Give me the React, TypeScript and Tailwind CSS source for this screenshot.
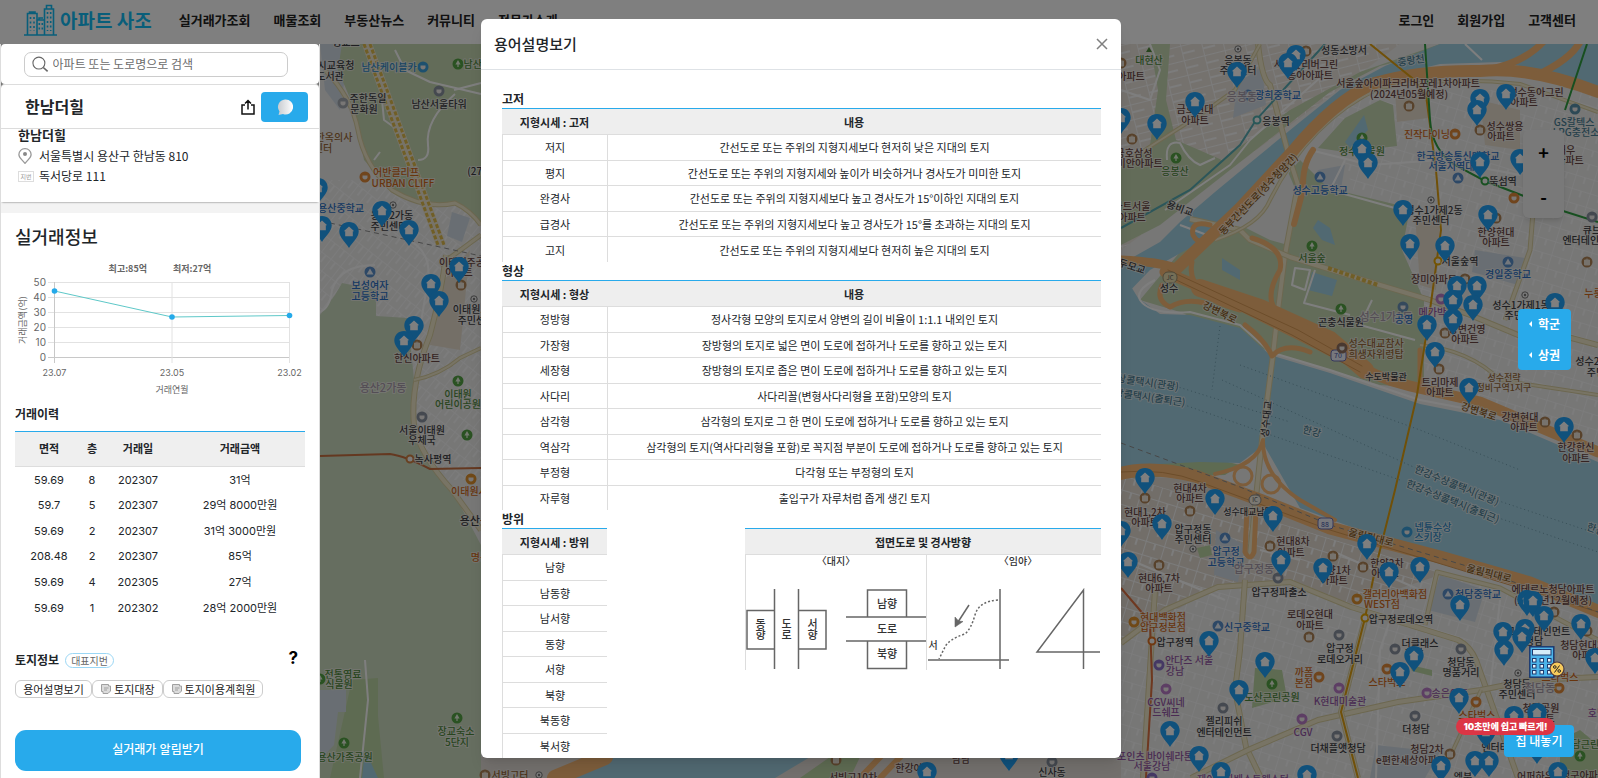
import React from "react";

const KR = "font-['Noto_Sans_CJK_KR',sans-serif]";
const UI = "font-['Inter','Noto_Sans_CJK_KR',sans-serif]";

/* ---------- map data ---------- */

const pins: [number, number][] = [
  [318, 178], [322, 216], [349, 222], [382, 201], [409, 220], [459, 257], [431, 274], [439, 291], [414, 316], [404, 331],
  [1237, 62], [1296, 45], [1288, 53], [1195, 92], [1121, 108], [1157, 114], [1480, 89], [1506, 84], [1477, 100],
  [1362, 139], [1368, 153], [1480, 152], [1520, 149], [1403, 200], [1488, 205], [1410, 234], [1445, 236],
  [1457, 276], [1477, 276], [1453, 290], [1473, 295], [1453, 309], [1427, 315], [1435, 342], [1555, 293], [1469, 378],
  [1564, 417], [1145, 468], [1215, 489], [1162, 514], [1273, 506], [1121, 521], [1128, 552], [1281, 550], [1323, 558],
  [1367, 534], [1389, 562], [1420, 557], [1460, 595], [1527, 590], [1533, 591], [1544, 606], [1581, 614], [1503, 622],
  [1525, 619], [1522, 627], [1504, 640], [1595, 648], [1209, 631], [1265, 652], [1414, 646], [1400, 662], [1239, 680],
  [1459, 688], [1170, 721], [1199, 746], [1221, 762], [1307, 765], [1441, 756], [1475, 751], [1489, 751], [1514, 706],
  [1537, 703], [1486, 722], [1537, 738], [1558, 762], [927, 762], [1009, 745],
];

const INK = "#3f3f45";
const BROWN = "#6a4744";
const GREEN = "#4f8a3c";
const BLUE = "#2a6fc4";
const SKY = "#2f8ac8";
const ORANGE = "#d06a1c";
const PURPLE = "#9457a6";
const TEAL = "#4a7f96";
const OCHRE = "#9a6b3a";
const FAINT = "#a99cab";

type Label = [number, number, string, string, number?, number?];

const labels: Label[] = [
  [346, 42, "경교드", INK], [336, 65, "시교육청", INK], [330, 76, "도서관", INK], [389, 67, "남산케이블카", SKY], [482, 64, "남산공원", GREEN],
  [368, 98, "주한독일", INK], [364, 109, "문화원", INK], [439, 104, "남산서울타워", INK], [334, 137, "한옥의사", OCHRE], [323, 148, "센터", OCHRE],
  [396, 172, "어반클리프", ORANGE], [403, 183, "URBAN CLIFF", ORANGE], [484, 171, "(270m)", INK], [341, 208, "용산중학교", BLUE],
  [392, 215, "용산2가동", INK], [389, 226, "주민센터", INK], [370, 285, "보성여자", BLUE], [370, 296, "고등학교", BLUE],
  [462, 262, "이태원주공", BROWN], [459, 272, "아파트", BROWN], [474, 309, "이태원1동", INK], [476, 320, "주민센터", INK],
  [417, 358, "한신아파트", BROWN], [383, 388, "용산2가동", FAINT, 0, 11], [458, 394, "이태원", GREEN], [458, 404, "어린이공원", GREEN],
  [422, 430, "서울이태원", INK], [422, 440, "우체국", INK], [433, 459, "녹사평역", INK], [474, 491, "이태원시장", ORANGE],
  [480, 521, "용산구청", INK, 0, 11], [480, 557, "명동", ORANGE], [343, 674, "전통염료", GREEN], [339, 684, "식물원", GREEN],
  [456, 731, "장교숙소", GREEN], [457, 742, "5단지", GREEN], [345, 757, "용산가족공원", GREEN],
  [510, 775, "서빙고터", OCHRE], [853, 777, "서빙고10차", BROWN], [909, 768, "한강아", BROWN], [961, 759, "남남", BROWN], [1052, 772, "신사동", INK],
  [1149, 60, "대현산", GREEN], [1131, 76, "아파트", BROWN], [1238, 60, "응봉동", INK], [1238, 70, "주민센터", INK], [1344, 50, "성동소방서", INK],
  [1306, 64, "서울숲리버그린", BROWN], [1310, 75, "동아아파트", BROWN], [1411, 60, "중랑천", TEAL, -8], [1278, 95, "광희중학교", BLUE], [1242, 97, "응봉동", FAINT, 0, 11],
  [1195, 109, "금호현대", BROWN], [1195, 120, "아파트", BROWN], [1276, 121, "응봉역", INK], [1408, 83, "서울숲아이파크리버포레1차아파트", BROWN],
  [1409, 94, "(2024년05월예정)", BROWN], [1536, 92, "성수동아그린", BROWN], [1524, 102, "아파트", BROWN], [1574, 122, "GS칼텍스", TEAL], [1576, 132, "LPG충전소", TEAL],
  [1505, 126, "성수쌍용", BROWN], [1501, 136, "아파트", BROWN], [1427, 134, "진작다이닝", ORANGE], [1134, 153, "금호삼성", BROWN], [1135, 163, "래미안아파트", BROWN],
  [1175, 171, "응봉산", GREEN], [1362, 151, "정수식물원", GREEN], [1458, 156, "한국방송통신대학교", BLUE], [1456, 166, "서울지역대학", BLUE],
  [1566, 150, "대우", BROWN], [1570, 160, "아파트", BROWN], [1503, 181, "뚝섬역", INK], [1320, 190, "성수고등학교", BLUE], [1132, 206, "아트서울", BROWN],
  [1132, 217, "아파트", BROWN], [1180, 208, "용비교", INK, 20], [1258, 194, "동부간선도로(성수청암간)", "#8a5a20", -46],
  [1434, 210, "성수1가제2동", INK], [1431, 220, "주민센터", INK], [1496, 232, "한양현대", BROWN], [1496, 242, "아파트", BROWN],
  [1592, 230, "큐브", INK], [1590, 240, "엔터테인먼트", INK], [1312, 258, "서울숲", GREEN], [1460, 261, "서울숲역", INK], [1434, 279, "장미아파트", BROWN],
  [1508, 274, "경일중학교", BLUE], [1598, 293, "누룽지", ORANGE], [1169, 288, "성수", INK], [1132, 266, "두모교", INK, 18], [1220, 312, "강변북로", "#8a5a20", 26],
  [1341, 322, "곤충식물원", INK], [1386, 317, "성수1가1동", FAINT, 0, 11], [1404, 319, "공영", BLUE], [1437, 312, "메가박스", PURPLE],
  [1521, 305, "성수1가제1동", INK], [1523, 315, "주민센터", INK], [1467, 329, "강변건영", BROWN], [1465, 339, "아파트", BROWN],
  [1376, 343, "성수대교참사", OCHRE], [1376, 354, "희생자위령탑", OCHRE], [1386, 376, "수도박물관", INK, 0, 9], [1440, 382, "트리마제", BROWN], [1440, 392, "아파트", BROWN],
  [1504, 377, "성수전략", OCHRE, 0, 9], [1504, 387, "정비구역1지구", OCHRE, 0, 9], [1592, 361, "성수2가", INK], [1596, 372, "주민", INK],
  [1148, 382, "상콜택시(관광)", TEAL, 8], [1150, 397, "상콜택시(출퇴근)", TEAL, 8], [1266, 419, "성수대교", INK, -84], [1479, 411, "강변북로", "#8a5a20", 18],
  [1312, 431, "한강", TEAL, 15], [1520, 417, "강변현대", BROWN], [1524, 427, "아파트", BROWN], [1576, 447, "한강한신", BROWN], [1576, 458, "아파트", BROWN],
  [1457, 485, "한강수상콜택시(관광)", TEAL, 22], [1453, 501, "한강수상콜택시(출퇴근)", TEAL, 22], [1596, 529, "한강", TEAL, 20],
  [1190, 488, "현대4차", BROWN], [1190, 498, "아파트", BROWN], [1145, 512, "현대1,2차", BROWN], [1145, 522, "아파트", BROWN], [1248, 511, "성수대교남단", INK, 0, 9],
  [1193, 529, "압구정동", INK], [1193, 539, "주민센터", INK], [1226, 551, "압구정", BLUE], [1226, 562, "고등학교", BLUE], [1293, 541, "현대8차", BROWN], [1291, 552, "아파트", BROWN],
  [1254, 569, "압구정동", FAINT, 0, 11], [1433, 527, "넵튠수상", SKY], [1428, 537, "스키장", SKY], [1371, 537, "올림픽대로", "#8a5a20", 14], [1489, 573, "올림픽대로", "#8a5a20", 14],
  [1334, 570, "한양1차", BROWN], [1334, 580, "아파트", BROWN], [1387, 563, "한양2차", BROWN], [1385, 573, "아파트", BROWN], [1159, 578, "현대6,7차", BROWN], [1159, 588, "아파트", BROWN],
  [1279, 592, "압구정파출소", INK], [1395, 594, "갤러리아백화점", ORANGE], [1382, 604, "WEST점", ORANGE], [1478, 594, "청담중학교", BLUE],
  [1553, 589, "에테르노청담아파트", BROWN], [1553, 600, "(2023년12월예정)", BROWN], [1163, 617, "현대백화점", ORANGE], [1163, 627, "압구정본점", ORANGE],
  [1310, 614, "로데오현대", BROWN], [1310, 625, "아파트", BROWN], [1401, 619, "압구정로데오역", INK], [1247, 627, "신구중학교", BLUE], [1175, 642, "압구정역", INK],
  [1340, 648, "압구정", INK], [1340, 659, "로데오거리", INK], [1420, 643, "더클래스", INK], [1414, 653, "청담", INK], [1538, 631, "고센터테인먼트", INK], [1534, 641, "청담", INK],
  [1586, 645, "청담현대3차", BROWN], [1586, 655, "아파트", BROWN], [1189, 660, "안다즈 서울", PURPLE], [1175, 671, "강남", PURPLE], [1461, 662, "청담동", INK], [1461, 672, "명품거리", INK],
  [1304, 672, "까폼", ORANGE], [1304, 683, "본점", ORANGE], [1387, 682, "스타벅스", ORANGE], [1560, 677, "스타벅스", ORANGE], [1517, 684, "청담동", INK], [1517, 694, "주민센터", INK], [1540, 688, "청담동", FAINT, 0, 11],
  [1166, 702, "CGV씨네", PURPLE], [1166, 712, "드쉐프", PURPLE], [1272, 697, "도산근린공원", GREEN], [1340, 701, "K현대미술관", PURPLE], [1450, 693, "송은아트", PURPLE],
  [1477, 715, "스타벅스", ORANGE], [1224, 721, "젤리피쉬", INK], [1224, 732, "엔터테인먼트", INK], [1303, 732, "CGV", PURPLE], [1416, 729, "더청담", INK],
  [1541, 708, "청담공원", BROWN], [1541, 718, "아파트", BROWN], [1597, 713, "호텔", PURPLE], [1155, 756, "포인츠 바이쉐라톤", PURPLE], [1152, 766, "서울강남", PURPLE], [1338, 748, "더채플앳청담", INK],
  [1427, 749, "청담2차", BROWN], [1411, 760, "e편한세상아파트", BROWN], [1509, 747, "엔터테인먼트", INK], [1590, 744, "청담근린공원", GREEN], [1243, 779, "제이앤파베스트웨스턴", PURPLE], [1540, 776, "어퍼하우스", BROWN], [1584, 775, "청구아파트", BROWN], [1463, 777, "엠북", INK],
];

const pois: [number, number, string][] = [
  [423, 67, "#3aa0dc"], [458, 64, "#55a444"], [439, 91, "#8a93a0"], [343, 103, "#a5abb2"], [365, 177, "#e08a3a"], [370, 272, "#5a90cc"],
  [461, 285, "#b08456"], [417, 345, "#b08456"], [458, 381, "#55a444"], [422, 417, "#8a93a0"], [467, 435, "#55a444"], [471, 479, "#e0922e"],
  [320, 679, "#55a444"], [457, 718, "#55a444"], [344, 743, "#55a444"], [485, 775, "#b08456"],
  [1306, 51, "#b08456"], [1248, 95, "#5a90cc"], [1121, 63, "#b08456"], [1132, 139, "#b08456"], [1176, 158, "#55a444"], [1409, 106, "#b08456"], [1575, 109, "#5a93ac"],
  [1480, 130, "#b08456"], [1455, 134, "#e08a3a"], [1362, 138, "#55a444"], [1320, 177, "#5a90cc"], [1458, 178, "#5a90cc"], [1514, 198, "#e08a3a"], [1496, 218, "#b08456"], [1592, 217, "#8a93a0"],
  [1312, 246, "#55a444"], [1465, 279, "#b08456"], [1508, 262, "#5a90cc"], [1587, 262, "#b08456"], [1341, 309, "#55a444"], [1403, 307, "#6a93b8"], [1441, 299, "#ba7cc8"], [1445, 333, "#b08456"],
  [1342, 348, "#907060"], [1439, 369, "#b08456"], [1545, 422, "#b08456"], [1577, 435, "#b08456"], [1145, 498, "#b08456"], [1190, 511, "#b08456"], [1225, 538, "#5a90cc"], [1159, 565, "#b08456"],
  [1270, 546, "#b08456"], [1333, 556, "#b08456"], [1363, 567, "#b08456"], [1407, 532, "#3aa0dc"], [1278, 578, "#8a93a0"], [1357, 599, "#e0922e"], [1448, 594, "#5a90cc"],
  [1134, 622, "#e0922e"], [1218, 626, "#5a90cc"], [1309, 637, "#b08456"], [1339, 635, "#8a93a0"], [1395, 649, "#8a93a0"], [1461, 649, "#8a93a0"], [1159, 665, "#8a70c8"], [1319, 677, "#e08a3a"],
  [1387, 669, "#e08a3a"], [1559, 688, "#e08a3a"], [1166, 689, "#ba7cc8"], [1272, 684, "#55a444"], [1339, 688, "#ba7cc8"], [1427, 693, "#ba7cc8"], [1476, 702, "#e08a3a"], [1223, 708, "#8a93a0"],
  [1302, 719, "#ba7cc8"], [1415, 716, "#8a93a0"], [1337, 736, "#8a93a0"], [1450, 754, "#b08456"], [1580, 756, "#55a444"], [1152, 778, "#8a70c8"], [1554, 612, "#b08456"], [1587, 631, "#b08456"],
  [836, 760, "#b08456"], [1052, 762, "#8a93a0"],
];

const rings: [number, number, string][] = [
  [393, 205, "#777"], [474, 299, "#777"], [539, 775, "#777"], [1238, 49, "#777"], [1431, 200, "#777"], [1525, 295, "#777"], [1193, 549, "#777"], [1518, 673, "#777"],
];

const stations: [number, number, string][] = [
  [410, 459, "#d08040"], [1257, 120, "#50b0b0"], [1485, 181, "#30a040"], [1438, 261, "#e8a800"], [1152, 641, "#e07020"], [1365, 618, "#e8a800"],
];

const creamRoads: [string, number][] = [
  ["M325 70 Q352 98 358 130 Q364 165 392 190 Q425 210 455 203 Q470 210 481 225", 4],
  ["M446 255 Q442 290 430 335 Q410 385 414 425 Q420 455 452 490 L481 530", 5],
  ["M414 380 Q440 375 460 358 L481 348", 3],
  ["M440 265 L481 235", 4],
  ["M1258 44 Q1262 80 1270 85 L1290 160 L1298 185 L1285 255 L1278 310 L1273 355 L1262 440 L1250 555", 5],
  ["M1190 219 L1240 230 L1250 240 L1290 257 L1380 285 L1430 300 L1470 315 L1530 340 L1560 335 L1598 345", 5],
  ["M1420 345 Q1470 350 1500 380 L1598 395", 3],
  ["M1121 165 L1200 115 L1235 90 L1260 44", 3],
  ["M1215 240 Q1260 225 1270 200 Q1310 120 1380 88 Q1450 76 1520 84 L1598 112", 3],
  ["M1534 200 L1530 250 L1505 320", 4],
  ["M1121 643 L1165 610 L1218 587 L1290 582 L1351 607 L1400 622 L1458 640 Q1470 646 1476 660 L1495 713 L1518 778", 5],
  ["M1245 580 L1240 650 L1235 690 L1246 747 L1261 778", 5],
  ["M1191 778 L1248 750 L1318 720 L1398 702 L1481 690 L1531 680 L1598 677", 5],
  ["M1425 625 L1437 572 L1500 588 L1598 640", 4],
  ["M1155 590 L1148 700 L1143 778", 5],
  ["M1365 620 L1341 712 L1358 778", 5],
  ["M1481 690 L1440 778", 3],
];

const whiteRoads: string[] = [
  "M395 50 L405 70 L430 82 L481 94", "M454 90 L481 83", "M380 80 L384 120 L405 135", "M455 94 Q425 120 428 145 Q430 160 418 160", "M374 160 L380 152",
  "M320 312 Q330 308 332 290 Q340 265 375 265", "M405 238 Q432 250 428 280 L418 340", "M360 778 L368 700 L365 660",
  "M1121 90 L1150 100 L1160 70 L1150 44", "M1167 160 Q1165 140 1180 143 Q1188 160 1200 165 L1215 158", "M1340 60 L1250 140 L1230 165 L1165 210",
  "M1310 150 L1370 165 L1440 160 L1520 175", "M1345 160 L1330 190 L1420 215", "M1180 225 L1207 235",
  "M1140 300 Q1135 290 1155 280 M1140 300 Q1150 315 1190 312 L1240 325 L1270 352 L1330 370 L1420 400 L1500 415 L1598 455",
  "M1295 268 L1310 270 L1305 290 L1292 285 Z", "M1315 270 L1304 303 L1350 315", "M1372 300 L1360 325 L1415 340", "M1465 44 L1482 60",
  "M1260 550 L1300 560 M1121 556 L1225 600 M1330 550 L1420 590", "M1400 590 L1380 650 L1376 778", "M1500 600 L1490 690",
];

/* ---------- map ---------- */

function MapPin({ x, y }: { x: number; y: number }) {
  return (
    <g transform={`translate(${x - 10} ${y})`}>
      <path d="M10 0 C4.2 0 .3 4.2 .3 9.6 C.3 15.4 6.4 20.4 10 26 C13.6 20.4 19.7 15.4 19.7 9.6 C19.7 4.2 15.8 0 10 0Z" fill="#20a2f8" />
      <path d="M10 4.6 L15.2 9.2 H13.8 V14.2 H6.2 V9.2 H4.8Z" fill="#fff" />
    </g>
  );
}

function CityMap() {
  const casing = "#d9cfa0";
  return (
    <svg className="absolute inset-0 size-full" viewBox="0 0 1598 778" preserveAspectRatio="xMinYMin slice" role="img" aria-label="지도">
      <defs>
        <pattern id="st1" width="19" height="14" patternUnits="userSpaceOnUse" patternTransform="rotate(17)">
          <path d="M0 0H19M0 0V14M10 0V7" stroke="#f8f8f8" strokeWidth="2" fill="none" />
        </pattern>
        <pattern id="st2" width="12" height="15" patternUnits="userSpaceOnUse" patternTransform="rotate(38)">
          <path d="M0 0H12M0 0V15M6 0V9" stroke="#f8f8f8" strokeWidth="2" fill="none" />
        </pattern>
        <pattern id="st3" width="21" height="15" patternUnits="userSpaceOnUse" patternTransform="rotate(-14)">
          <path d="M0 0H21M0 0V15M0 8H13" stroke="#f8f8f8" strokeWidth="2" fill="none" />
        </pattern>
      </defs>
      <rect width="1598" height="778" fill="#eeeeed" />
      <path d="M320 180H481V480H320Z" fill="url(#st2)" />
      <path d="M1121 44H1400L1121 250Z" fill="#ebe5dd" />
      <path d="M1121 44H1400L1121 250Z" fill="url(#st3)" />
      <path d="M1320 90H1598V450L1420 390Z" fill="url(#st1)" />
      <path d="M1121 475L1200 480L1400 550L1440 575L1350 605L1290 582L1218 587L1121 640Z" fill="#e4ddd3" />
      <path d="M1121 475L1598 620V778H1121Z" fill="url(#st1)" />
      <path d="M481 757H1121V778H481Z" fill="#e6e0da" />

      {/* blocks */}
      <path d="M320 44H350L340 110L325 90Z M452 212L470 218L462 242L447 236Z M1237 84L1262 66L1266 105L1233 118Z M1318 170L1345 165L1340 195L1310 190Z M1475 250L1525 258L1518 285L1472 272Z M1216 530L1245 545L1238 582L1214 575Z M1440 575L1485 590L1475 622L1428 610Z M1376 745L1440 752L1425 778H1370Z" fill="#d3dde6" />
      <path d="M435 290L470 250L460 350L430 345Z M1395 90H1430L1428 118L1397 122Z M1415 215L1440 225L1436 290L1420 285Z M1480 100L1520 110V150L1485 145Z" fill="#e9dfcf" />

      {/* parks */}
      <path d="M342 44H481V225L455 203L430 207L392 190L364 160L355 110L338 70Z" fill="#c6d8b2" />
      <path d="M320 315L335 295L342 283L376 290V316L408 318L414 380V440L452 490L481 545V778H320Z" fill="#cddcc0" />
      <path d="M1150 44H1170L1166 100L1176 140L1222 160L1290 110L1360 72L1440 44H1465L1380 66L1330 92L1230 170L1160 225L1121 245V165L1150 145L1158 90Z" fill="#c6d8b2" />
      <path d="M1380 100L1393 105L1397 146L1345 152L1318 148L1345 118Z M1300 160L1328 188L1410 208L1402 250L1424 300L1424 388L1380 385L1270 352L1180 312L1140 300L1190 240L1240 230Z" fill="#c6d8b2" />
      <path d="M1255 668L1282 670L1287 698L1252 708Z M1121 478L1165 460L1200 455L1240 465L1225 475Z M1410 665L1432 670V676L1412 671Z M1197 548L1210 545L1212 555L1200 558Z M1560 740L1580 730L1598 745V778H1560Z M352 680L378 678V716L384 778H330Z M800 778L830 757H860L850 778Z" fill="#bdd6a4" />
      <path d="M320 690H346V712H338L334 745L320 760Z" fill="#d3dde6" />
      <path d="M1240 225L1285 165L1300 200L1288 245L1270 240Z" fill="#eeeeed" />

      {/* water */}
      <path d="M1440 44L1385 66L1340 90L1300 122L1250 163L1215 192L1180 222L1160 242L1121 264V300L1150 270L1195 245L1230 215L1290 150L1320 120L1350 98L1390 76L1440 64L1500 62L1560 74L1598 90V44Z" fill="#a2d2e4" />
      <path d="M1121 270L1138 298L1160 314L1190 315L1240 328L1270 355L1330 373L1420 404L1500 420L1598 462V612L1500 572L1400 545L1300 508L1264 445L1240 463L1200 462L1160 464L1121 470Z" fill="#a2d2e4" />
      <path d="M1318 220L1330 228L1335 245L1322 240L1313 228Z M1312 272L1337 280L1332 296L1308 290Z M1364 115L1368 130L1350 148L1345 142Z M1222 258L1240 270L1240 280L1222 270Z M365 750L378 778H362Z" fill="#a2d2e4" />
      <path d="M550 778L600 757H810L775 778Z" fill="#a2d2e4" />

      {/* streets */}
      {whiteRoads.map((d) => (
        <path key={d} d={d} fill="none" stroke="#fdfdfd" strokeWidth="2" strokeLinejoin="round" />
      ))}
      {creamRoads.map(([d, w]) => (
        <g key={d} fill="none" strokeLinejoin="round">
          <path d={d} stroke={casing} strokeWidth={w + 1} />
          <path d={d} stroke="#f1e9cb" strokeWidth={w - 1} />
        </g>
      ))}
      <g fill="none">
        <path d="M367 44L441 245" stroke="#efe7d0" strokeWidth="10" />
        <path d="M364 44L438 245M370 44L444 245" stroke="#e0bc4c" strokeWidth="3" strokeDasharray="4 2" />
        <path d="M1328 268L1378 285" stroke="#e0bc4c" strokeWidth="4" strokeDasharray="4 2" />
      </g>

      {/* expressways */}
      <g fill="none" strokeLinejoin="round" strokeLinecap="round">
        <path d="M1170 275L1240 208L1292 152Q1335 100 1375 83Q1420 70 1480 71Q1530 66 1598 92" stroke="#fabb76" strokeWidth="12" />
        <path d="M1470 72Q1520 68 1545 40M1535 76Q1570 60 1580 42" stroke="#fabb76" strokeWidth="7" />
        <path d="M1313 150Q1302 165 1303 190L1294 224" stroke="#fabb76" strokeWidth="6" />
        <path d="M1175 268Q1160 262 1121 260" stroke="#fabb76" strokeWidth="9" />
        <path d="M1165 272L1230 300L1300 335L1345 358Q1375 378 1410 386L1480 402L1598 452" stroke="#fabb76" strokeWidth="11" />
        <path d="M1200 288L1260 308L1330 340L1365 370" stroke="#fabb76" strokeWidth="18" />
        <path d="M1252 238Q1285 248 1280 270Q1262 300 1280 315L1340 342M1210 225Q1190 220 1193 235Q1200 248 1212 235M1192 262Q1185 295 1240 310M1162 285Q1155 300 1170 307Q1185 298 1205 303M1245 325Q1265 340 1272 356Q1285 342 1310 352M1420 350V385" stroke="#fabb76" strokeWidth="5" />
        <path d="M1118 474Q1150 465 1195 476L1260 500L1330 528L1440 557L1530 583L1600 612" stroke="#fabb76" strokeWidth="13" />
        <path d="M1215 474Q1258 465 1263 440Q1262 475 1300 500L1335 520" stroke="#fabb76" strokeWidth="4" />
        <circle cx="1243" cy="476" r="9" stroke="#fabb76" strokeWidth="3" />
        <circle cx="1271" cy="484" r="9" stroke="#fabb76" strokeWidth="3" />
        <path d="M1247 510L1245 552Q1250 562 1254 552L1256 510" stroke="#fabb76" strokeWidth="5" />
        <path d="M555 778L605 757" stroke="#fabb76" strokeWidth="16" />
        <path d="M880 778L905 752M860 778L885 752" stroke="#fabb76" strokeWidth="6" />
        <path d="M1168 270L1298 330L1362 366M1170 277L1292 335L1360 372M1121 472Q1165 468 1200 482L1330 530L1598 612" stroke="#d99a55" strokeWidth="1" />
      </g>

      {/* rail and ferry lines */}
      <g fill="none">
        <path d="M320 456L390 454Q405 456 430 469L481 468" stroke="#c87040" strokeWidth="2" />
        <path d="M330 223L481 256M1121 443L1240 487L1330 525L1480 570L1598 612" stroke="#8f8f8f" strokeWidth="1" strokeDasharray="5 4" />
        <path d="M1325 44L1256 120L1240 145L1190 190L1121 228" stroke="#58acb4" strokeWidth="2" />
        <path d="M1370 44L1412 78L1426 95L1436 170L1441 230L1430 310L1417 395L1395 490L1375 570L1365 618L1341 712L1358 778" stroke="#e0a010" strokeWidth="2" />
        <path d="M1425 44L1430 120Q1432 150 1455 165L1485 181L1560 210L1598 222M1587 44L1565 110" stroke="#2f9f40" strokeWidth="2" />
        <path d="M1121 588L1150 622L1152 680L1146 778" stroke="#dd7040" strokeWidth="2" />
        <path d="M1172 385L1290 422M1176 402L1400 480M1220 326L1212 390M1222 380L1420 470M1490 498L1598 534M1490 515L1598 552M1240 365L1420 430L1520 470" stroke="#6f9dae" strokeWidth="1" strokeDasharray="1 3" />
      </g>

      <g>
        <rect x="1163" y="272" width="14" height="11" rx="5" fill="#e9dcae" stroke="#9a8f70" />
        <text x="1170" y="280" textAnchor="middle" fontSize="6" fill="#555">JC</text>
        <rect x="1249" y="495" width="12" height="10" rx="5" fill="#f4f0e4" stroke="#8a8a8a" />
        <text x="1255" y="502" textAnchor="middle" fontSize="6" fill="#555">IC</text>
        <rect x="1331" y="350" width="15" height="11" rx="3" fill="#eef0fa" stroke="#6a70b8" />
        <text x="1338" y="358" textAnchor="middle" fontSize="7" fill="#4050a8">70</text>
        <rect x="1318" y="518" width="15" height="11" rx="3" fill="#eef0fa" stroke="#6a70b8" />
        <text x="1325" y="527" textAnchor="middle" fontSize="7" fill="#4050a8">88</text>
        <path d="M1149 47L1152 52H1146Z" fill={GREEN} />
      </g>

      {pois.map(([x, y, c], i) => (
        <g key={i}>
          <circle cx={x} cy={y} r="5.5" fill={c} />
          {c === "#55a444" ? (
            <path d={`M${x} ${y - 4}l2.6 4.6h-2v2.4h-1.2v-2.4h-2z`} fill="#e8f2e0" />
          ) : c === "#b08456" ? (
            <path d={`M${x - 2.5} ${y - 2}h5v5h-5zM${x} ${y - 3.5}v3`} fill="#efe6da" stroke="#efe6da" />
          ) : c === "#5a90cc" ? (
            <path d={`M${x} ${y - 3.5}l3.5 6h-7z`} fill="#e8f0fa" />
          ) : (
            <path d={`M${x - 2.5} ${y - 1.5}h5v2.5q-2.5 3-5 0z`} fill="#f2efec" />
          )}
        </g>
      ))}
      {rings.map(([x, y, c], i) => (
        <g key={i}>
          <circle cx={x} cy={y} r="3.2" fill="#f0f0f0" stroke={c} />
          <circle cx={x} cy={y} r="1.2" fill={c} />
        </g>
      ))}
      {stations.map(([x, y, c], i) => (
        <circle key={i} cx={x} cy={y} r="3.5" fill="#f6f6f6" stroke={c} strokeWidth="2" />
      ))}
      <g className={KR} fontWeight="500" textAnchor="middle" stroke="#f3f1ee" strokeWidth="2" strokeOpacity=".7" paintOrder="stroke" strokeLinejoin="round">
        {labels.map(([x, y, t, c, rot, size], i) => (
          <text key={i} x={x} y={y + 4} fontSize={size ?? 10} fill={c} transform={rot ? `rotate(${rot} ${x} ${y})` : undefined}>
            {t}
          </text>
        ))}
      </g>
      {pins.map(([x, y], i) => (
        <MapPin key={i} x={x} y={y} />
      ))}
    </svg>
  );
}

/* ---------- header ---------- */

function Logo() {
  return (
    <svg className="h-8 w-[34px]" viewBox="0 0 34 32" fill="none" stroke="currentColor" strokeWidth="1.6">
      <path d="M0 31H33M3.5 31V9.5H13V31M13 16H20.5V31M20.5 31V5H29.5V31M22.5 5V1.5H27.5V5M5.5 9.5V8H11V9.5M15 16V14H19" />
      <path d="M6.500 13V27M10 13V27M15.300 19V28M18.300 19V28M23.500 8V27M26.700 8V27" strokeDasharray="2 2.500" />
    </svg>
  );
}

const leftNav = ["실거래가조회", "매물조회", "부동산뉴스", "커뮤니티", "전문가소개"];
const rightNav = ["로그인", "회원가입", "고객센터"];

function Header() {
  return (
    <header className="relative flex h-11 items-center justify-between bg-white pb-1 pl-6 pr-[22px] text-[13px] font-bold text-[#222]">
      <div className="flex items-center">
        <a href="#" className="flex items-center gap-[2px] text-[#12bdf5]">
          <Logo />
          <span className="text-[19px] leading-8">아파트 사조</span>
        </a>
        <nav className="ml-[27px] flex gap-[23px]">
          {leftNav.map((n) => (
            <a key={n} href="#">{n}</a>
          ))}
        </nav>
      </div>
      <nav className="flex gap-[23px]">
        {rightNav.map((n) => (
          <a key={n} href="#">{n}</a>
        ))}
      </nav>
    </header>
  );
}

/* ---------- side panel ---------- */

function PriceChart() {
  const xs = [53.5, 171, 288.5];
  const ys = [11, 37, 35.5];
  return (
    <svg className="block w-full" viewBox="0 -5 318 123" role="img" aria-label="실거래가 그래프">
      {[50, 40, 30, 20, 10, 0].map((v, i) => (
        <g key={v}>
          <path d={`M47 ${2.5 + i * 15}H288`} stroke={v === 0 ? "#c8c8c8" : "#e2e2e2"} />
          <text x="45" y={6 + i * 15} textAnchor="end" fontSize="10" fill="#666">{v}</text>
        </g>
      ))}
      {xs.map((x, i) => (
        <path key={x} d={`M${x} 2V83`} stroke={i === 0 ? "#c8c8c8" : "#e2e2e2"} />
      ))}
      <polyline points={xs.map((x, i) => `${x},${ys[i]}`).join(" ")} fill="none" stroke="#5ec8c8" />
      {xs.map((x, i) => (
        <circle key={x} cx={x} cy={ys[i]} r="2.8" fill="#25aaea" />
      ))}
      {["23.07", "23.05", "23.02"].map((t, i) => (
        <text key={t} x={xs[i]} y="96" textAnchor="middle" fontSize="9" fill="#666">{t}</text>
      ))}
      <text x="171" y="113" textAnchor="middle" fontSize="9" fill="#666">거래연월</text>
      <text x="22" y="43" textAnchor="middle" fontSize="9" fill="#666" transform="rotate(-90 22 40)">거래금액(억)</text>
    </svg>
  );
}

const deals = [
  ["59.69", "8", "202307", "31억"],
  ["59.7", "5", "202307", "29억 8000만원"],
  ["59.69", "2", "202307", "31억 3000만원"],
  ["208.48", "2", "202307", "85억"],
  ["59.69", "4", "202305", "27억"],
  ["59.69", "1", "202302", "28억 2000만원"],
];

function DocIcon() {
  return (
    <svg className="size-3" viewBox="0 0 12 12" fill="#dcdcdc" stroke="#a0a0a0">
      <path d="M1.500 1.500H8.500V3H10.500V8L8 10.500H3V8.500H1.500Z" />
      <path d="M4 5H8.500M4 7H7" fill="none" />
    </svg>
  );
}

function SidePanel() {
  const pill = "flex h-[18px] items-center justify-center gap-[2px] rounded-[6px] border border-[#ccc] bg-white text-[11px] leading-4 text-[#222]";
  return (
    <aside className={`absolute bottom-0 left-0 top-11 flex w-80 flex-col overflow-hidden border-x border-[#ddd] text-[#212529] ${UI}`}>
      <div className="flex h-10 shrink-0 items-center rounded-[4px] bg-white pl-[23px]">
        <label className="flex h-[25px] w-[264px] items-center gap-1 rounded-[7px] border border-[#ccc] pl-[7px]">
          <svg className="size-[18px] text-[#666]" viewBox="0 0 18 18" fill="none" stroke="currentColor" strokeWidth="1.200">
            <circle cx="7.500" cy="8" r="6.500" />
            <path d="M12.300 12.800L17 17" strokeWidth="1.800" />
          </svg>
          <input aria-label="검색" placeholder="아파트 또는 도로명으로 검색" className={`w-full min-w-0 bg-transparent text-[12px] outline-none placeholder:text-[#6c6c6c] ${KR}`} />
        </label>
      </div>
      <div className="flex h-[45px] shrink-0 items-center rounded-t-[4px] border-y border-[#ddd] bg-white pl-6 pr-[11px]">
        <h1 className="grow text-[16px] font-bold">한남더힐</h1>
        <button aria-label="공유" className="mr-1.5">
          <svg className="h-4 w-[14px]" viewBox="0 0 14 16" fill="none" stroke="#111" strokeWidth="1.500">
            <path d="M4 6H1V15H13V6H10M7 10.500V1.500M4 4.500L7 1.500L10 4.500" />
          </svg>
        </button>
        <button aria-label="채팅" className="flex h-[30px] w-[47px] items-center justify-center rounded-[4px] bg-[#28aaeb]">
          <svg className="size-4" viewBox="0 0 16 16">
            <defs>
              <linearGradient id="bubble" x1="0" x2="1">
                <stop offset="0" stopColor="#c8ccd0" />
                <stop offset="1" stopColor="#fff" />
              </linearGradient>
            </defs>
            <path d="M8 .5A7.500 7.500 0 1 1 6 15L1.500 16L2.500 12.500A7.500 7.500 0 0 1 8 .5Z" fill="url(#bubble)" />
          </svg>
        </button>
      </div>

      <div className="min-h-0 grow bg-white">
        <section className="relative h-[73px] bg-white pl-[17px] shadow-[0_1px_2px_-1px_rgba(0,0,0,.6)]">
          <h2 className="text-[13px] font-bold leading-[13px]">한남더힐</h2>
          <p className={`mt-1 flex h-5 items-center gap-[7px] text-[12px] ${KR}`}>
            <svg className="h-4 w-[14px]" viewBox="0 0 14 16" fill="none" stroke="#999" strokeWidth="1.300">
              <path d="M7 .7C3.500.7.9 3.200.9 6.500C.9 10 4.500 12 7 15.400C9.500 12 13.100 10 13.100 6.500C13.100 3.200 10.500.7 7 .7Z" />
              <circle cx="7" cy="6" r="2" fill="#888" stroke="none" />
            </svg>
            <span>서울특별시 용산구 한남동 810</span>
          </p>
          <p className={`flex h-5 items-center gap-[5px] text-[12px] ${KR}`}>
            <span className="flex h-[11px] w-4 items-center justify-center border border-[#ddd] text-[6px] text-[#999]">지번</span>
            <span>독서당로 111</span>
          </p>
        </section>
        <div className="h-[11px] bg-[#f3f3f3]" />
        <section>
          <h2 className="ml-[14px] pt-3 text-[18px] font-medium leading-[26px]">실거래정보</h2>
          <div className={`mt-3 flex justify-center gap-[26px] text-[9px] font-bold leading-3 text-[#666] ${KR}`}>
            <span>최고:85억</span>
            <span>최저:27억</span>
          </div>
          <PriceChart />
        </section>
        <section className="px-[14px]">
          <h3 className="mt-[5px] text-[12px] font-bold leading-6">거래이력</h3>
          <table className="mt-1 w-full table-fixed border-collapse text-center text-[11px]">
            <colgroup>
              <col className="w-[68px]" />
              <col className="w-[18px]" />
              <col className="w-[74px]" />
              <col />
            </colgroup>
            <thead>
              <tr className="h-[35px] border-b border-t border-b-[#ddd] border-t-[#28aaeb] bg-[#efefef]">
                {["면적", "층", "거래일", "거래금액"].map((h) => (
                  <th key={h} className="p-0 font-bold">{h}</th>
                ))}
              </tr>
            </thead>
            <tbody>
              {deals.map((r, i) => (
                <tr key={i} className={i % 3 === 2 ? "h-[25px]" : "h-[26px]"}>
                  {r.map((c, j) => (
                    <td key={j} className="p-0">{c}</td>
                  ))}
                </tr>
              ))}
            </tbody>
          </table>
        </section>
        <section className="px-[14px] pt-8">
          <div className="flex h-4 items-center">
            <h3 className="text-[12px] font-bold">토지정보</h3>
            <span className={`ml-[6px] flex h-[15px] items-center rounded-full border border-[#9bd7f5] px-[5px] text-[10px] text-[#666] ${KR}`}>대표지번</span>
            <button aria-label="도움말" className="mb-1.5 ml-auto mr-[7px] text-[17px] font-bold leading-4 text-black">?</button>
          </div>
          <div className={`mt-[11px] flex ${KR}`}>
            <button className={`${pill} w-[77px]`}>용어설명보기</button>
            <button className={`${pill} w-[71px]`}><DocIcon />토지대장</button>
            <button className={`${pill} w-[100px]`}><DocIcon />토지이용계획원</button>
          </div>
          <button className="mt-8 h-[41px] w-[286px] rounded-[11px] bg-[#28aaeb] text-[12px] font-medium text-white">실거래가 알림받기</button>
        </section>
      </div>
    </aside>
  );
}

/* ---------- floating map controls ---------- */

function FloatingControls() {
  return (
    <>
      <div className="absolute right-[27px] top-[309px] flex h-[61px] w-[53px] flex-col rounded-[4px] bg-[#28aaeb] text-[12px] font-bold text-white">
        {["학군", "상권"].map((t) => (
          <button key={t} className="flex flex-1 items-center justify-center gap-1.5">
            <svg className="h-[6px] w-[3px]" viewBox="0 0 3 6" fill="#fff"><path d="M3 0V6L0 3Z" /></svg>
            {t}
          </button>
        ))}
      </div>
      <button aria-label="대출 계산기" className="absolute right-[33px] top-[646px]">
        <svg className="h-8 w-9" viewBox="0 0 36 32">
          <rect x=".8" y=".8" width="24" height="30.400" fill="#4cb4ea" stroke="#1c3a70" strokeWidth="1.500" />
          <rect x="3.500" y="3.500" width="18.500" height="5.500" fill="#d4ecf8" stroke="#1c3a70" />
          {[12.500, 18.500, 24.500].map((y) =>
            [3.500, 11, 18.500].map((x) => <rect key={`${x}-${y}`} x={x} y={y} width="3.500" height="3.500" fill="#e6f3fa" stroke="#1c3a70" />)
          )}
          <circle cx="28" cy="23" r="7" fill="#f8cc5c" stroke="#4a3a40" strokeWidth="1.200" />
          <path d="M30.500 19.500L25.500 26.500" stroke="#222" />
          <circle cx="25.800" cy="21" r="1.300" fill="none" stroke="#222" />
          <circle cx="30.200" cy="25" r="1.300" fill="none" stroke="#222" />
        </svg>
      </button>
      <button className="absolute right-6 top-[725px] h-8 w-[70px] rounded-[4px] bg-[#28aaeb] text-[12px] font-medium text-white">집 내놓기</button>
      <span className={`absolute right-[43px] top-[718px] flex h-[17px] w-[99px] items-center justify-center whitespace-nowrap rounded-full bg-[#dc3545] text-[9px] font-black text-white ${UI}`}>
        10초만에 쉽고 빠르게!
      </span>
    </>
  );
}

/* ---------- glossary dialog ---------- */

const heights = [
  ["저지", "간선도로 또는 주위의 지형지세보다 현저히 낮은 지대의 토지"],
  ["평지", "간선도로 또는 주위의 지형지세와 높이가 비슷하거나 경사도가 미미한 토지"],
  ["완경사", "간선도로 또는 주위의 지형지세보다 높고 경사도가 15°이하인 지대의 토지"],
  ["급경사", "간선도로 또는 주위의 지형지세보다 높고 경사도가 15°를 초과하는 지대의 토지"],
  ["고지", "간선도로 또는 주위의 지형지세보다 현저히 높은 지대의 토지"],
];
const shapes = [
  ["정방형", "정사각형 모양의 토지로서 양변의 길이 비율이 1:1.1 내외인 토지"],
  ["가장형", "장방형의 토지로 넓은 면이 도로에 접하거나 도로를 향하고 있는 토지"],
  ["세장형", "장방형의 토지로 좁은 면이 도로에 접하거나 도로를 향하고 있는 토지"],
  ["사다리", "사다리꼴(변형사다리형을 포함)모양의 토지"],
  ["삼각형", "삼각형의 토지로 그 한 면이 도로에 접하거나 도로를 향하고 있는 토지"],
  ["역삼각", "삼각형의 토지(역사다리형을 포함)로 꼭지점 부분이 도로에 접하거나 도로를 향하고 있는 토지"],
  ["부정형", "다각형 또는 부정형의 토지"],
  ["자루형", "출입구가 자루처럼 좁게 생긴 토지"],
];
const directions = ["남향", "남동향", "남서향", "동향", "서향", "북향", "북동향", "북서향"];

const th = "h-[26px] border-t border-[#28aaeb] bg-[#eee] p-0 font-bold";
const td = "border-l border-t border-[#ddd] p-0";
const sectionTitle = "h-[18px] text-[12px] font-bold leading-[18px]";

function TermTable({ title, rows, className }: { title: string; rows: string[][]; className: string }) {
  return (
    <table className={`w-full table-fixed border-separate border-spacing-0 text-center text-[11px] leading-4 ${className}`}>
      <thead>
        <tr>
          <th className={`${th} w-[105px]`}>지형시세 : {title}</th>
          <th className={th}>내용</th>
        </tr>
      </thead>
      <tbody>
        {rows.map(([k, v]) => (
          <tr key={k}>
            <td className={td}>{k}</td>
            <td className={td}>{v}</td>
          </tr>
        ))}
      </tbody>
    </table>
  );
}

function SiteDiagram() {
  return (
    <svg className="block w-full" viewBox="0 0 180 115" fill="none" stroke="#666" strokeWidth="1.500">
      <path d="M28.500 34V114M52.500 34V114M28.500 55.500H1V94H28.500M52.500 55.500H80V94H52.500M100 62H180M100 86H180M121.500 62V35H160.500V62M121.500 86V113.500H160.500V86" />
      <g fill="#333" stroke="none" fontSize="11" textAnchor="middle" fontWeight="500">
        <text x="90" y="10" fontSize="10">〈대지〉</text>
        <text x="14.500" y="73">동</text><text x="14.500" y="84">향</text>
        <text x="40.500" y="73">도</text><text x="40.500" y="84">로</text>
        <text x="66.500" y="73">서</text><text x="66.500" y="84">향</text>
        <text x="141" y="53">남향</text>
        <text x="141" y="78">도로</text>
        <text x="141" y="103">북향</text>
      </g>
    </svg>
  );
}

function SlopeDiagram() {
  return (
    <svg className="block w-full" viewBox="0 0 174 115" fill="none" stroke="#666" strokeWidth="1.500">
      <path d="M73 34V114M1 105H82M156.500 114V35L110 97H173" />
      <path d="M71 45Q52 46 48 60Q44 74 38 79Q22 84 18 92L12 104" strokeDasharray="2 2" />
      <path d="M42 50L31 67" />
      <path d="M28 62L28 72L36 66.500L31.500 66Z" fill="#666" strokeWidth=".6" />
      <g fill="#333" stroke="none" fontWeight="500" textAnchor="middle">
        <text x="91" y="10" fontSize="10">〈임야〉</text>
        <text x="6" y="94" fontSize="10">서</text>
      </g>
    </svg>
  );
}

function GlossaryDialog() {
  return (
    <div role="dialog" aria-label="용어설명보기" className="absolute inset-x-0 bottom-5 top-[19px] flex justify-center pl-1">
      <div className="flex w-[640px] flex-col overflow-hidden rounded-[6px] bg-white text-[#212529] shadow-lg">
        <div className="flex h-[51px] shrink-0 items-center justify-between border-b border-[#dee2e6] px-[13px]">
          <h2 className="text-[15px] font-medium">용어설명보기</h2>
          <button aria-label="닫기">
            <svg className="size-3" viewBox="0 0 12 12" stroke="#808080" strokeWidth="1.500"><path d="M1 1L11 11M11 1L1 11" /></svg>
          </button>
        </div>
        <div className="min-h-0 grow overflow-hidden pl-[21px] pr-5 pt-5">
          <h3 className={sectionTitle}>고저</h3>
          <TermTable title="고저" rows={heights} className="h-[154px]" />
          <h3 className={sectionTitle}>형상</h3>
          <TermTable title="형상" rows={shapes} className="h-[230px]" />
          <h3 className={sectionTitle}>방위</h3>
          <div className="flex items-start justify-between">
            <table className="h-[230px] w-[105px] border-separate border-spacing-0 text-center text-[11px] leading-4">
              <thead>
                <tr><th className={th}>지형시세 : 방위</th></tr>
              </thead>
              <tbody>
                {directions.map((d) => (
                  <tr key={d}><td className={td}>{d}</td></tr>
                ))}
              </tbody>
            </table>
            <table className="w-[356px] table-fixed border-separate border-spacing-0 text-center text-[11px] leading-4">
              <colgroup>
                <col className="w-[181px]" />
                <col />
              </colgroup>
              <thead>
                <tr><th colSpan={2} className={th}>접면도로 및 경사방향</th></tr>
              </thead>
              <tbody>
                <tr>
                  <td className={`${td} align-top`}><SiteDiagram /></td>
                  <td className={`${td} align-top`}><SlopeDiagram /></td>
                </tr>
              </tbody>
            </table>
          </div>
        </div>
      </div>
    </div>
  );
}

export default function App() {
  return (
    <div className={`relative h-screen overflow-hidden ${KR}`}>
      <CityMap />
      <Header />
      <div className="absolute right-[34px] top-[130px] flex h-[88px] w-[41px] flex-col rounded-[6px] bg-[#f2f2f2] text-[18px] font-bold leading-none text-black shadow-md">
        <button aria-label="확대" className="flex-1">+</button>
        <button aria-label="축소" className="flex-1">-</button>
      </div>
      <div className="absolute inset-0 bg-black/50" />
      <SidePanel />
      <FloatingControls />
      <GlossaryDialog />
    </div>
  );
}
